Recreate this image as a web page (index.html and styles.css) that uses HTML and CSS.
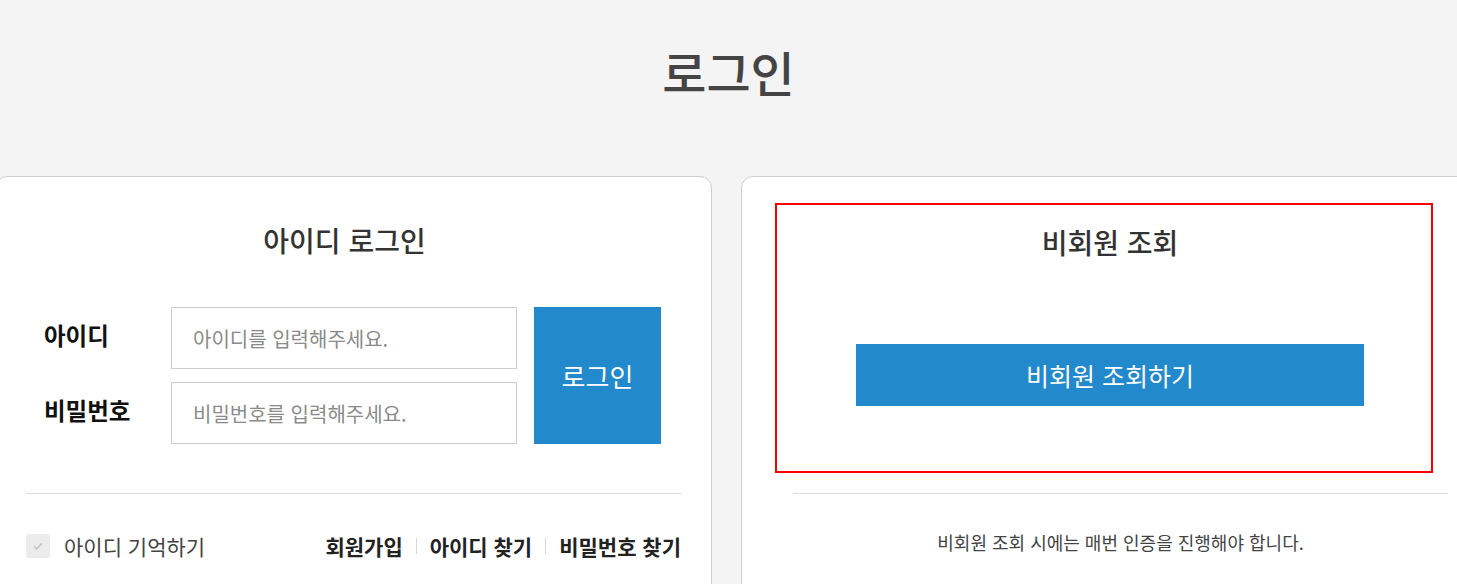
FILE: index.html
```html
<!DOCTYPE html>
<html lang="ko">
<head>
<meta charset="utf-8">
<title>로그인</title>
<link rel="stylesheet" href="styles.css">
</head>
<body>
<header class="page-head">
  <h1 class="page-title">로그인</h1>
</header>
<main class="cards">
  <section class="card card-login">
    <h2 class="card-title login-title">아이디 로그인</h2>
    <form class="login-form">
      <div class="fields">
        <div class="field">
          <label class="field-label">아이디</label>
          <input class="field-input" type="text" placeholder="아이디를 입력해주세요.">
        </div>
        <div class="field">
          <label class="field-label">비밀번호</label>
          <input class="field-input" type="password" placeholder="비밀번호를 입력해주세요.">
        </div>
      </div>
      <button class="btn-login" type="button">로그인</button>
    </form>
    <div class="divider"></div>
    <div class="login-foot">
      <label class="remember">
        <span class="check">
          <svg width="14" height="14" viewBox="0 0 14 14"><path d="M3 7.3l2.6 2.6L11 4.4" fill="none" stroke="#c4c4c4" stroke-width="1.5"/></svg>
        </span>
        <span class="remember-text">아이디 기억하기</span>
      </label>
      <nav class="links">
        <a class="link">회원가입</a>
        <span class="sep"></span>
        <a class="link">아이디 찾기</a>
        <span class="sep"></span>
        <a class="link">비밀번호 찾기</a>
      </nav>
    </div>
  </section>
  <section class="card card-guest">
    <div class="guest-box">
      <h2 class="card-title guest-title">비회원 조회</h2>
      <button class="btn-guest" type="button">비회원 조회하기</button>
    </div>
    <div class="divider"></div>
    <p class="guest-note">비회원 조회 시에는 매번 인증을 진행해야 합니다.</p>
  </section>
</main>
</body>
</html>
```

FILE: styles.css
```css
* { box-sizing: border-box; }
html, body { margin: 0; padding: 0; }
body {
  background: #f4f4f4;
  font-family: "Noto Sans CJK KR", "Noto Sans", sans-serif;
  overflow: hidden;
  width: 1457px;
  height: 584px;
}
.page-head {
  height: 176px;
  display: flex;
  justify-content: center;
  padding-top: 38px;
}
.page-title {
  margin: 0;
  font-size: 48px;
  font-weight: 500;
  color: #444;
  line-height: 66px;
}
.cards {
  display: flex;
  gap: 29px;
  margin-left: -5px;
  width: 1520px;
}
.card {
  background: #fff;
  border: 1px solid #cfcfcf;
  border-radius: 12px 12px 0 0;
  height: 420px;
  flex: none;
}
.card-login {
  width: 717px;
  padding: 38px 30px 0 30px;
}
.card-guest {
  width: 760px;
  padding: 26px 0 0 51px;
}
.card-title {
  margin: 0;
  text-align: center;
  font-size: 28px;
  font-weight: 500;
  color: #333;
  line-height: 50px;
}
.login-title {
  padding-right: 18px;
}
.login-form {
  display: flex;
  margin-top: 42px;
  gap: 17px;
}
.fields {
  display: flex;
  flex-direction: column;
  gap: 13px;
}
.field {
  display: flex;
  align-items: center;
}
.field-label {
  width: 145px;
  padding-left: 18px;
  padding-bottom: 6px;
  font-size: 23.5px;
  font-weight: 700;
  color: #111;
}
.field-input {
  width: 346px;
  height: 62px;
  border: 1px solid #cccccc;
  padding: 0 21px;
  font-family: inherit;
  font-size: 20px;
  color: #333;
  background: #fff;
  outline: none;
}
.field-input::placeholder { color: #8a8a8a; }
.btn-login {
  width: 127px;
  height: 137px;
  border: 0;
  background: #2289cc;
  color: #fff;
  font-family: inherit;
  font-size: 26px;
  font-weight: 400;
  padding: 0;
}
.divider {
  width: 655px;
  height: 1px;
  background: #dcdcdc;
}
.card-login .divider { margin-top: 49px; }
.card-guest .divider { margin-top: 20px; }
.login-foot {
  display: flex;
  align-items: center;
  justify-content: space-between;
  width: 655px;
  margin-top: 37px;
}
.remember {
  display: flex;
  align-items: center;
  gap: 14px;
}
.check {
  width: 24px;
  height: 24px;
  background: #ececec;
  border-radius: 3px;
  display: flex;
  align-items: center;
  justify-content: center;
}
.remember-text {
  font-size: 21px;
  color: #444;
}
.links {
  display: flex;
  align-items: center;
  gap: 13px;
}
.link {
  font-size: 21px;
  font-weight: 700;
  color: #222;
}
.sep {
  width: 1px;
  height: 16px;
  background: #d8d8d8;
}
.guest-box {
  width: 658px;
  height: 270px;
  margin-left: -18px;
  border: 2px solid #ff0000;
  padding: 12px 0 0 12px;
  display: flex;
  flex-direction: column;
  align-items: center;
}
.btn-guest {
  width: 508px;
  height: 62px;
  margin-top: 77px;
  border: 0;
  background: #2289cc;
  color: #fff;
  font-family: inherit;
  font-size: 25px;
  font-weight: 400;
  padding: 0;
}
.guest-note {
  width: 655px;
  margin: 33px 0 0;
  text-align: center;
  font-size: 18px;
  color: #444;
  line-height: 30px;
}
```
